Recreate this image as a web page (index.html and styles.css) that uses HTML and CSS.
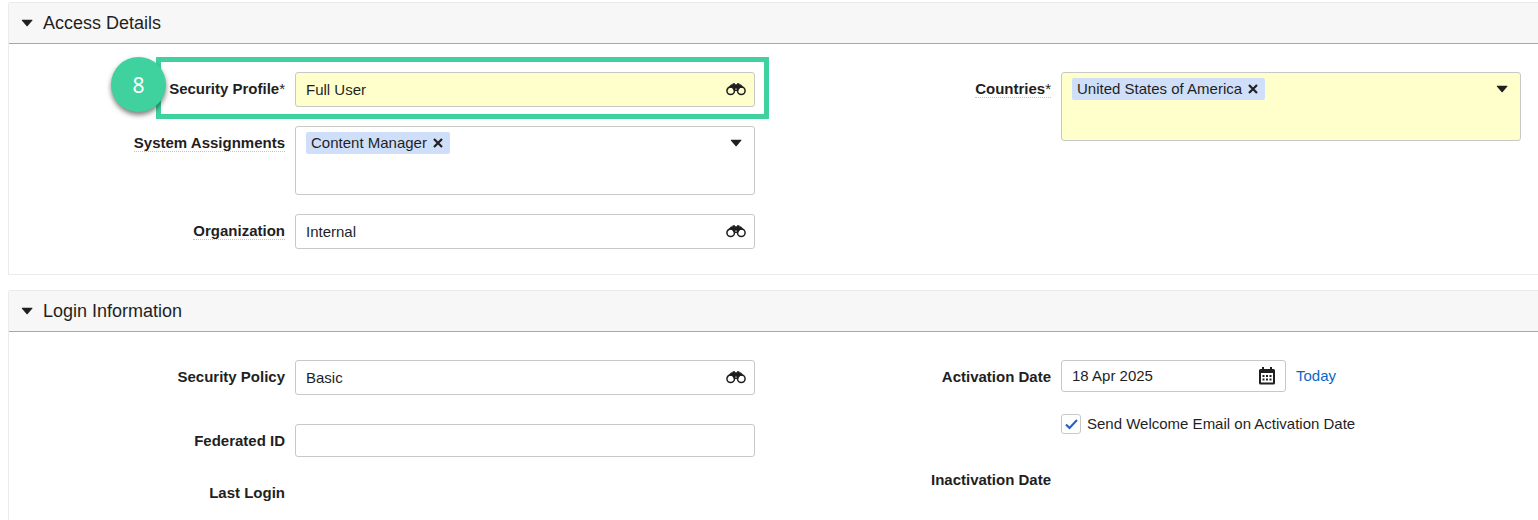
FILE: index.html
```html
<!DOCTYPE html>
<html lang="en">
<head>
  <meta charset="utf-8">
  <title>User Details</title>
  <link rel="stylesheet" href="styles.css">
</head>
<body>
  <!-- shared icons -->
  <svg class="sprite" aria-hidden="true">
    <symbol id="caret" viewBox="0 0 12 8">
      <path d="M1.200 0.800h9.800q0.800 0 0.300 0.600L6.700 6.900q-0.600 0.600-1.200 0L0.900 1.400Q0.400 0.800 1.200 0.800z" fill="currentColor"/>
    </symbol>
    <symbol id="binoculars" viewBox="0 0 20 13">
      <path d="M1.600 5L5 1.600 6.600 1.200V0.300H9V1.200H11V0.300H13.400V1.200L15 1.600 18.400 5 14 4.800 12 8H8L6 4.800z" fill="currentColor"/>
      <circle cx="4.700" cy="7.800" r="3.800" fill="none" stroke="currentColor" stroke-width="1.500"/>
      <circle cx="15.300" cy="7.800" r="3.800" fill="none" stroke="currentColor" stroke-width="1.500"/>
      <circle cx="10" cy="6.200" r="0.900" fill="#999"/>
    </symbol>
    <symbol id="calendar" viewBox="0 0 16 18">
      <path d="M3 0h2v2h6V0h2v2h1.500A1.500 1.500 0 0 1 16 3.500V16A1.500 1.500 0 0 1 14.500 17.500h-13A1.500 1.500 0 0 1 0 16V3.500A1.500 1.500 0 0 1 1.500 2H3zM2 6v9.500h12V6z" fill="currentColor" fill-rule="evenodd"/>
      <path d="M3.500 8h2v2h-2zM7 8h2v2H7zM10.500 8h2v2h-2zM3.500 11.500h2v2h-2zM7 11.500h2v2H7zM10.500 11.500h2v2h-2z" fill="currentColor"/>
    </symbol>
    <symbol id="close" viewBox="0 0 10 10">
      <path d="M1 1l8 8M9 1L1 9" fill="none" stroke="currentColor" stroke-width="2.200"/>
    </symbol>
  </svg>

  <section class="panel">
    <h2 class="panel-header">
      <button class="panel-toggle" type="button" aria-expanded="true">
        <svg class="icon-caret"><use href="#caret"/></svg>
        Access Details
      </button>
    </h2>
    <div class="panel-body">
      <div class="column">
        <div class="field">
          <label class="label" for="securityProfile">Security Profile<span class="required">*</span></label>
          <div class="lookup required-field">
            <input id="securityProfile" type="text" value="Full User">
            <button class="icon-button" type="button" aria-label="Find security profile"><svg class="icon-binoculars"><use href="#binoculars"/></svg></button>
          </div>
          <div class="highlight"></div>
          <div class="step">8</div>
        </div>
        <div class="field">
          <div class="label" id="systemLabel"><span class="hint">System Assignments</span></div>
          <div class="multi" role="group" aria-labelledby="systemLabel">
            <span class="chip">Content Manager
              <button type="button" class="chip-remove" aria-label="Remove Content Manager"><svg class="icon-close"><use href="#close"/></svg></button>
            </span>
            <button class="icon-button" type="button" aria-label="Open system assignments"><svg class="icon-caret"><use href="#caret"/></svg></button>
          </div>
        </div>
        <div class="field">
          <label class="label" for="organization"><span class="hint">Organization</span></label>
          <div class="lookup">
            <input id="organization" type="text" value="Internal">
            <button class="icon-button" type="button" aria-label="Find organization"><svg class="icon-binoculars"><use href="#binoculars"/></svg></button>
          </div>
        </div>
      </div>
      <div class="column">
        <div class="field">
          <div class="label" id="countriesLabel"><span class="hint">Countries<span class="required">*</span></span></div>
          <div class="multi required-field" role="group" aria-labelledby="countriesLabel">
            <span class="chip">United States of America
              <button type="button" class="chip-remove" aria-label="Remove United States of America"><svg class="icon-close"><use href="#close"/></svg></button>
            </span>
            <button class="icon-button" type="button" aria-label="Open countries"><svg class="icon-caret"><use href="#caret"/></svg></button>
          </div>
        </div>
      </div>
    </div>
  </section>

  <section class="panel">
    <h2 class="panel-header">
      <button class="panel-toggle" type="button" aria-expanded="true">
        <svg class="icon-caret"><use href="#caret"/></svg>
        Login Information
      </button>
    </h2>
    <div class="panel-body">
      <div class="column loose">
        <div class="field">
          <label class="label" for="securityPolicy">Security Policy</label>
          <div class="lookup">
            <input id="securityPolicy" type="text" value="Basic">
            <button class="icon-button" type="button" aria-label="Find security policy"><svg class="icon-binoculars"><use href="#binoculars"/></svg></button>
          </div>
        </div>
        <div class="field">
          <label class="label" for="federatedId">Federated ID</label>
          <div class="textbox">
            <input id="federatedId" type="text">
          </div>
        </div>
        <div class="field tight">
          <div class="label">Last Login</div>
        </div>
      </div>
      <div class="column loose">
        <div class="field">
          <label class="label" for="activationDate">Activation Date</label>
          <div class="date-group">
            <div class="date-row">
              <div class="date">
                <input id="activationDate" type="text" value="18 Apr 2025">
                <button class="icon-button" type="button" aria-label="Open calendar"><svg class="icon-calendar"><use href="#calendar"/></svg></button>
              </div>
              <a class="today" href="#">Today</a>
            </div>
            <label class="check">
              <input type="checkbox" checked>
              Send Welcome Email on Activation Date
            </label>
          </div>
        </div>
        <div class="field">
          <div class="label">Inactivation Date</div>
        </div>
      </div>
    </div>
  </section>
</body>
</html>
```
FILE: styles.css
```css
* {
  box-sizing: border-box;
}

body {
  margin: 0;
  padding: 2px 0 0 8px;
  overflow: hidden;
  background: #ffffff;
  color: #1f1f1f;
  font-family: "Liberation Sans", Arial, sans-serif;
  font-size: 15px;
  line-height: 20px;
}

button,
input {
  font: inherit;
  color: inherit;
}

button {
  padding: 0;
  border: none;
  background: none;
  cursor: pointer;
}

.sprite {
  display: none;
}

.panel {
  margin-bottom: 15px;
  border: 1px solid #ebebeb;
  border-right: none;
  border-radius: 3px 0 0 0;
}

.panel-header {
  margin: 0;
  background: #f7f7f7;
  border-bottom: 1px solid #f29a2e;
}

.panel-toggle {
  display: flex;
  align-items: center;
  gap: 10px;
  width: 100%;
  height: 40px;
  padding-left: 12px;
  font-size: 18px;
  font-weight: normal;
}

.panel-body {
  display: grid;
  grid-template-columns: 1fr 1fr;
  gap: 20px;
  padding: 28px 17px 25px 0;
}

.column {
  display: flex;
  flex-direction: column;
  gap: 19px;
}

.column.loose {
  gap: 29px;
}

.field {
  position: relative;
  display: grid;
  grid-template-columns: 37% 1fr;
  column-gap: 10px;
  align-items: start;
}

.field.tight {
  margin-top: -10px;
}

.label {
  padding-top: 7px;
  font-weight: bold;
  text-align: right;
}

.required {
  font-weight: normal;
}

.hint {
  border-bottom: 1px dotted #c4c4c4;
}

.lookup,
.textbox,
.multi,
.date {
  display: flex;
  background: #ffffff;
  border: 1px solid #c8c8c8;
  border-radius: 3px;
}

.lookup {
  height: 35px;
}

.textbox {
  height: 33px;
}

.date {
  width: 225px;
  height: 32px;
}

.multi {
  align-items: flex-start;
  justify-content: space-between;
  min-height: 69px;
  padding: 5px 0 5px 10px;
}

.required-field {
  background: #ffffcc;
}

.lookup input,
.textbox input,
.date input {
  flex: 1;
  min-width: 0;
  padding: 0 0 0 10px;
  border: none;
  outline: none;
  background: transparent;
}

.icon-button {
  display: flex;
  align-items: center;
  justify-content: center;
  width: 36px;
}

.multi .icon-button {
  height: 22px;
}

.chip {
  display: flex;
  align-items: center;
  gap: 6px;
  height: 22px;
  padding: 0 7px 0 5px;
  background: #d0dff9;
  border-radius: 2px;
}

.chip-remove {
  display: flex;
}

.icon-caret {
  width: 12px;
  height: 8px;
}

.icon-binoculars {
  width: 20px;
  height: 13px;
}

.icon-calendar {
  width: 16px;
  height: 18px;
}

.icon-close {
  width: 10px;
  height: 10px;
}

.date-group {
  display: flex;
  flex-direction: column;
  gap: 22px;
}

.date-row {
  display: flex;
  align-items: center;
  gap: 10px;
}

.today {
  color: #0b66c9;
  text-decoration: none;
}

.check {
  display: flex;
  align-items: center;
  gap: 6px;
}

.check input {
  appearance: none;
  width: 20px;
  height: 20px;
  margin: 0;
  border: 1px solid #c8c8c8;
  border-radius: 3px;
}

.check input:checked {
  background: url("data:image/svg+xml,%3Csvg xmlns='http://www.w3.org/2000/svg' viewBox='0 0 18 18'%3E%3Cpath d='M4 9.500l3.500 3.500L15 5' fill='none' stroke='%231f5fc8' stroke-width='2'/%3E%3C/svg%3E") center / 18px no-repeat;
}

/* callout drawn over the form */
.highlight {
  position: absolute;
  top: -15px;
  right: -14px;
  bottom: -12px;
  left: 147px;
  border: 5px solid #3fd29f;
  pointer-events: none;
}

.step {
  position: absolute;
  top: -15px;
  left: 102px;
  display: flex;
  align-items: center;
  justify-content: center;
  width: 55px;
  height: 55px;
  border-radius: 50%;
  background: #3fd29f;
  box-shadow: 0 3px 5px rgba(0, 0, 0, 0.5);
  color: #ffffff;
  font-family: "Noto Sans", sans-serif;
  font-size: 21px;
}
```
